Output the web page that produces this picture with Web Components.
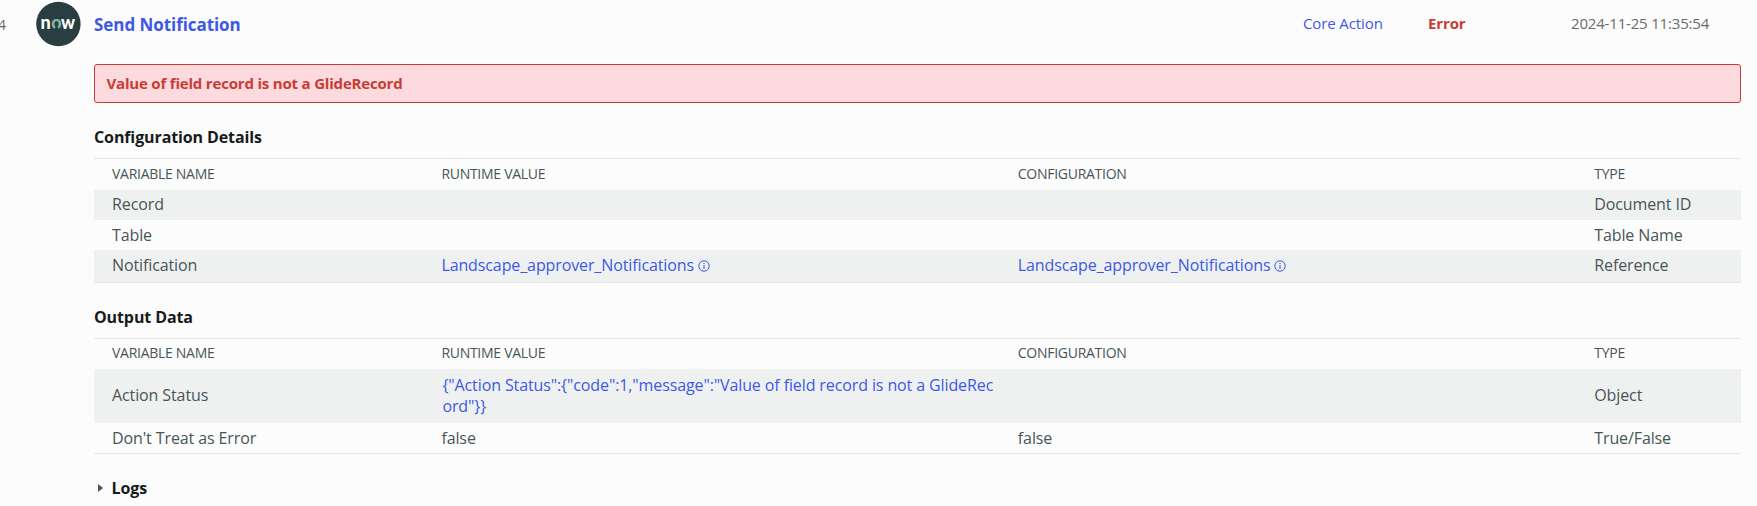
<!DOCTYPE html>
<html lang="en">
<head>
<meta charset="UTF-8">
<title>Send Notification</title>
<style>
    body {
        margin: 0;
        height: 506px;
        overflow: hidden;
        background: #fcfcfc;
        color: #485558;
        font-family: "Open Sans", "Noto Sans", sans-serif;
        font-size: 16px;
        letter-spacing: -0.11px;
    }
</style>
</head>
<body>
<flow-step>
    <step-header slot="header" number="4" kind="Core Action" state="Error" time="2024-11-25 11:35:54">Send Notification</step-header>
    <error-banner>Value of field record is not a GlideRecord</error-banner>
    <variable-table heading="Configuration Details" id="config"></variable-table>
    <variable-table heading="Output Data" id="output"></variable-table>
    <log-toggle>Logs</log-toggle>
</flow-step>

<script>
class FlowStep extends HTMLElement {
    constructor() {
        super();
        this.attachShadow({ mode: 'open' });
    }

    connectedCallback() {
        this.shadowRoot.innerHTML = `
            <style>
                :host { display: block; }
                .body { margin: 0 16px 0 94px; }
            </style>
            <slot name="header"></slot>
            <div class="body"><slot></slot></div>
        `;
    }
}

class NowLogo extends HTMLElement {
    constructor() {
        super();
        this.attachShadow({ mode: 'open' });
    }

    connectedCallback() {
        this.shadowRoot.innerHTML = `
            <style>
                :host { display: block; width: 46px; height: 46px; }
                svg { display: block; }
                text {
                    font-family: Lato, sans-serif;
                    font-weight: 900;
                    font-size: 18px;
                    letter-spacing: 0;
                }
            </style>
            <svg width="46" height="46" viewBox="0 0 46 46">
                <circle cx="22.4" cy="23" r="22.2" fill="#293e40"/>
                <text y="27.8" fill="#fff"><tspan x="4.6">n</tspan><tspan x="15.2" fill="#81b5a1">o</tspan><tspan x="25.1" textLength="14" lengthAdjust="spacingAndGlyphs">w</tspan></text>
                <path d="M18.4 29L19.6 25.6Q20.6 26.2 21.8 25.6L23 29z" fill="#293e40"/>
            </svg>
        `;
    }
}

class StepHeader extends HTMLElement {
    constructor() {
        super();
        this.attachShadow({ mode: 'open' });
    }

    connectedCallback() {
        this.shadowRoot.innerHTML = `
            <style>
                :host {
                    display: grid;
                    grid-template-columns: 36px 58px 1209px 102px 23px 143px 1fr;
                    align-items: center;
                    height: 48px;
                    line-height: 22px;
                    font-size: 15px;
                }
                .number { margin-left: -2px; padding-top: 2px; color: #666; font-size: 14px; }
                .title {
                    padding-top: 2px;
                    color: #3c59e7;
                    font-size: 17px;
                    font-weight: 700;
                    letter-spacing: -0.06px;
                }
                .kind, .state, .time { padding-bottom: 2px; }
                .kind { color: #3c59e7; }
                .line { width: 1px; height: 24px; margin-top: -2px; background: #f8f8f9; }
                .state { color: #c83c36; font-weight: 700; }
                .time { color: #6b6b6b; letter-spacing: -0.18px; }
            </style>
            <span class="number">${this.getAttribute('number')}</span>
            <now-logo></now-logo>
            <span class="title"><slot></slot></span>
            <span class="kind">${this.getAttribute('kind')}</span>
            <span class="line"></span>
            <span class="state">${this.getAttribute('state')}</span>
            <span class="time">${this.getAttribute('time')}</span>
        `;
    }
}

class ErrorBanner extends HTMLElement {
    constructor() {
        super();
        this.attachShadow({ mode: 'open' });
    }

    connectedCallback() {
        this.shadowRoot.innerHTML = `
            <style>
                :host {
                    display: block;
                    box-sizing: border-box;
                    height: 39px;
                    margin-top: 16px;
                    padding: 0 11.5px;
                    border: 1px solid #c83c36;
                    border-radius: 3px;
                    background: #fddadd;
                    color: #c83c36;
                    font-size: 15px;
                    font-weight: 700;
                    letter-spacing: -0.19px;
                    line-height: 36px;
                }
            </style>
            <slot></slot>
        `;
    }
}

class RecordLink extends HTMLElement {
    constructor() {
        super();
        this.attachShadow({ mode: 'open' });
    }

    connectedCallback() {
        this.shadowRoot.innerHTML = `
            <style>
                :host { display: flex; align-items: center; gap: 4px; color: #3c59e7; }
                svg { margin-top: 2px; }
            </style>
            <slot></slot>
            <svg width="12" height="12" viewBox="0 0 12 12">
                <circle cx="6" cy="6" r="5.2" fill="none" stroke="currentColor" stroke-width="1"/>
                <path d="M6 5v4M6 3v1" stroke="currentColor" stroke-width="1.1"/>
            </svg>
        `;
    }
}

class VariableTable extends HTMLElement {
    constructor() {
        super();
        this.attachShadow({ mode: 'open' });
    }

    set rows(rows) {
        const columns = ['VARIABLE NAME', 'RUNTIME VALUE', 'CONFIGURATION', 'TYPE'];
        this.shadowRoot.innerHTML = `
            <style>
                :host { display: block; }
                h3 {
                    margin: 0;
                    height: 32px;
                    padding-top: 23px;
                    color: #161b1c;
                    font-size: 16px;
                    font-weight: 700;
                    line-height: 22px;
                }
                .table { border: solid #e4e6e6; border-width: 1px 0; }
                .row {
                    display: grid;
                    grid-template-columns: 20% 35% 35% 10%;
                    align-items: center;
                    height: 30px;
                    line-height: 21px;
                }
                .row > div { padding: 0 18px 2px; }
                .row > .low { padding-bottom: 0; }
                .head { height: var(--head-height, 31px); font-size: 14px; letter-spacing: -0.28px; }
                .head > div { padding-bottom: var(--head-lift, 2px); }
                .shaded { background: #eff1f1; }
                .json { margin-right: -14px; padding: 2px 0 0 1px; color: #3c59e7; word-break: break-all; }
            </style>
            <h3>${this.getAttribute('heading')}</h3>
            <div class="table">
                <div class="row head">${columns.map(name => `<div>${name}</div>`).join('')}</div>
                ${rows.map((row, i) => `
                    <div class="row ${i % 2 ? '' : 'shaded'}" style="height: ${row.height}px">
                        ${row.cells.map(cell => `<div class="${i % 2 ? 'low' : ''}">${cell}</div>`).join('')}
                    </div>
                `).join('')}
            </div>
        `;
    }
}

class LogToggle extends HTMLElement {
    constructor() {
        super();
        this.attachShadow({ mode: 'open' });
    }

    connectedCallback() {
        this.shadowRoot.innerHTML = `
            <style>
                :host {
                    display: flex;
                    align-items: center;
                    gap: 8.5px;
                    margin-top: 23px;
                    padding-left: 4px;
                    color: #161b1c;
                    font-weight: 700;
                    line-height: 22px;
                }
            </style>
            <svg width="5" height="8" viewBox="0 0 5 8"><path d="M0 0L5 4L0 8z" fill="#485558"/></svg>
            <slot></slot>
        `;
    }
}

customElements.define('flow-step', FlowStep);
customElements.define('now-logo', NowLogo);
customElements.define('step-header', StepHeader);
customElements.define('error-banner', ErrorBanner);
customElements.define('record-link', RecordLink);
customElements.define('variable-table', VariableTable);
customElements.define('log-toggle', LogToggle);

const link = '<record-link>Landscape_approver_Notifications</record-link>';
const status = '<div class="json">{"Action Status":{"code":1,"message":"Value of field record is not a GlideRecord"}}</div>';

document.getElementById('config').rows = [
    { height: 30, cells: ['Record', '', '', 'Document ID'] },
    { height: 30, cells: ['Table', '', '', 'Table Name'] },
    { height: 32, cells: ['Notification', link, link, 'Reference'] }
];

const output = document.getElementById('output');
output.style.setProperty('--head-height', '30px');
output.style.setProperty('--head-lift', '3px');
output.rows = [
    { height: 54, cells: ['Action Status', status, '', 'Object'] },
    { height: 30, cells: ["Don't Treat as Error", 'false', 'false', 'True/False'] }
];
</script>
</body>
</html>
